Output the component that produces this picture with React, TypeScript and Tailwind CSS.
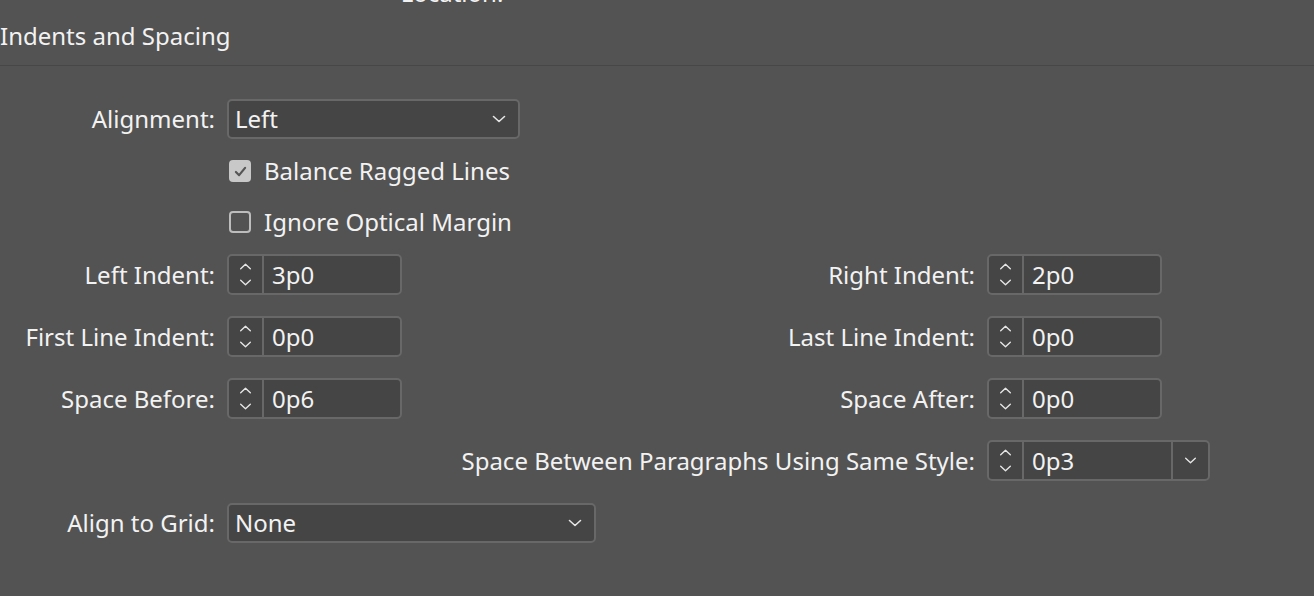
import React from 'react';

const Chevron = ({ dir = 'down', className = '' }: { dir?: 'up' | 'down'; className?: string }) => (
    <svg viewBox="0 0 14 8" className={className} fill="none" stroke="currentColor" strokeWidth="1.6" strokeLinecap="round" strokeLinejoin="round">
        {dir === 'down' ? <path d="M1.5 1.5 7 6.5l5.5-5" /> : <path d="M1.5 6.5 7 1.5l5.5 5" />}
    </svg>
);

const Dropdown = ({ value, width }: { value: string; width: string }) => (
    <div className={`${width} h-[40px] flex items-center justify-between pl-[6px] pr-[12px] bg-[#454545] border-2 border-[#686868] rounded-[5px]`}>
        <span>{value}</span>
        <Chevron className="w-[14px] h-[8px] text-[#e6e6e6]" />
    </div>
);

const Spinner = ({ value, withMenu = false }: { value: string; withMenu?: boolean }) => (
    <div className={`${withMenu ? 'w-[223px]' : 'w-[175px]'} h-[41px] flex bg-[#454545] border-2 border-[#686868] rounded-[5px]`}>
        <div className="w-[35px] flex flex-col items-center justify-center gap-[9px] border-r-2 border-[#686868] text-[#e6e6e6]">
            <Chevron dir="up" className="w-[13px] h-[7px]" />
            <Chevron dir="down" className="w-[13px] h-[7px]" />
        </div>
        <div className="flex-1 flex items-center pl-[8px]">{value}</div>
        {withMenu && (
            <div className="w-[37px] flex items-center justify-center border-l-2 border-[#686868] text-[#e6e6e6]">
                <Chevron className="w-[13px] h-[7px]" />
            </div>
        )}
    </div>
);

const Checkbox = ({ checked, label }: { checked: boolean; label: string }) => (
    <div className="flex items-center gap-[13px] pl-[229px] h-[40px]">
        {checked ? (
            <div className="w-[22px] h-[22px] rounded-[4px] bg-[#c8c8c8] flex items-center justify-center text-[#555555]">
                <svg viewBox="0 0 14 12" className="w-[13px] h-[11px]" fill="none" stroke="currentColor" strokeWidth="2.4" strokeLinecap="round" strokeLinejoin="round">
                    <path d="M2 6.5 5.5 10 12 2" />
                </svg>
            </div>
        ) : (
            <div className="w-[22px] h-[22px] rounded-[4px] border-2 border-[#bdbdbd]" />
        )}
        <span>{label}</span>
    </div>
);

const IndentRow = ({ left, leftValue, right, rightValue }: { left: string; leftValue: string; right: string; rightValue: string }) => (
    <div className="flex items-center h-[41px]">
        <div className="w-[215px] text-right">{left}</div>
        <div className="ml-[12px]">
            <Spinner value={leftValue} />
        </div>
        <div className="w-[573px] text-right">{right}</div>
        <div className="ml-[12px]">
            <Spinner value={rightValue} />
        </div>
    </div>
);

export default function App() {
    return (
        <div className="w-[1314px] h-[596px] overflow-hidden bg-[#535353] text-[#f2f2f2] font-['Noto_Sans',sans-serif] text-[24px] leading-none">
            <div className="h-[4px] overflow-hidden flex justify-center pr-[410px]">
                <span className="-mt-[17px] leading-[20px]">Location:</span>
            </div>
            <div className="h-[62px] flex items-center pt-[2px] border-b border-[#474747]">
                <h2>Indents and Spacing</h2>
            </div>

            <div className="pt-[33px] flex flex-col">
                <div className="flex items-center h-[40px]">
                    <div className="w-[215px] text-right">Alignment:</div>
                    <div className="ml-[12px]">
                        <Dropdown value="Left" width="w-[293px]" />
                    </div>
                </div>
                <div className="mt-[12px]">
                    <Checkbox checked label="Balance Ragged Lines" />
                </div>
                <div className="mt-[11px]">
                    <Checkbox checked={false} label="Ignore Optical Margin" />
                </div>

                <div className="mt-[12px] flex flex-col gap-[21px]">
                    <IndentRow left="Left Indent:" leftValue="3p0" right="Right Indent:" rightValue="2p0" />
                    <IndentRow left="First Line Indent:" leftValue="0p0" right="Last Line Indent:" rightValue="0p0" />
                    <IndentRow left="Space Before:" leftValue="0p6" right="Space After:" rightValue="0p0" />
                    <div className="flex items-center h-[41px] pl-[402px]">
                        <div className="w-[573px] text-right">Space Between Paragraphs Using Same Style:</div>
                        <div className="ml-[12px]">
                            <Spinner value="0p3" withMenu />
                        </div>
                    </div>
                    <div className="flex items-center h-[41px]">
                        <div className="w-[215px] text-right">Align to Grid:</div>
                        <div className="ml-[12px]">
                            <Dropdown value="None" width="w-[369px]" />
                        </div>
                    </div>
                </div>
            </div>
        </div>
    );
}
